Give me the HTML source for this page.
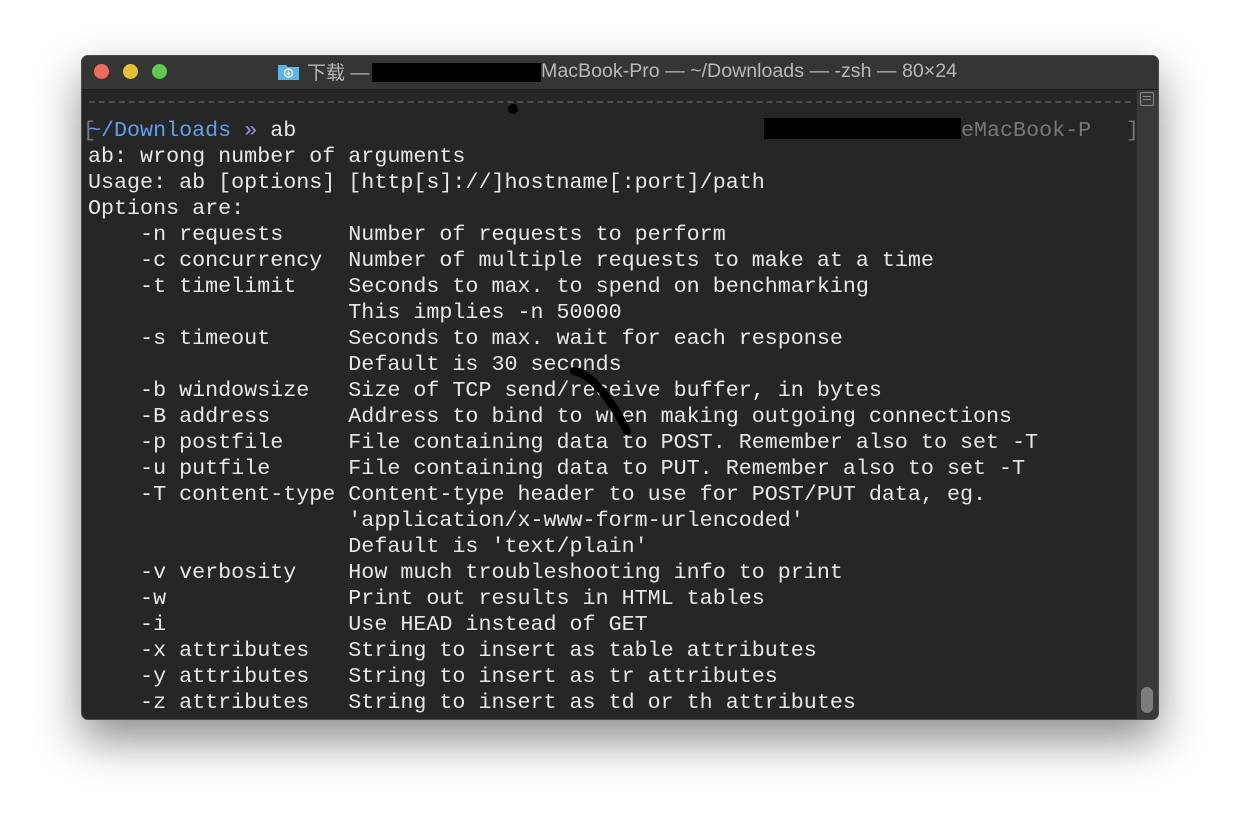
<!DOCTYPE html>
<html><head><meta charset="utf-8"><style>
html,body{margin:0;padding:0;background:#fff;width:1240px;height:828px;overflow:hidden;position:relative}
.win{position:absolute;left:81px;top:55px;width:1078px;height:665px;background:#262626;border-radius:7px;box-shadow:0 20px 45px rgba(0,0,0,.45);overflow:hidden;border:1px solid #4a4a4a;box-sizing:border-box}
.tb{position:absolute;left:0;top:0;width:100%;height:33px;background:#353535;border-bottom:1px solid #1a1a1a}
.dot{position:absolute;top:8px;width:15px;height:15px;border-radius:50%}
.title{position:absolute;top:4px;left:0;width:100%;font:19px "Liberation Sans","Noto Sans CJK SC",sans-serif;color:#b8b8b8;white-space:nowrap}
.term{position:absolute;left:6px;top:62px;font:21.7px/26px "Liberation Mono",monospace;color:#e8e8e8;white-space:pre}
.sb{position:absolute;right:0;top:34px;width:21px;bottom:0;background:#393939;border-left:1px solid #2c2c2c}
</style></head><body>
<div class="win">
<div class="tb">
<div class="dot" style="left:12px;background:#ed6a5e"></div>
<div class="dot" style="left:41px;background:#e3bf3c"></div>
<div class="dot" style="left:70px;background:#62c554"></div>
<div class="title"><svg style="position:absolute;left:196px;top:3px" width="21" height="17" viewBox="0 0 21 17"><path d="M0 2h8l2 2h11v13H0z" fill="#5fb4e6"/><circle cx="10.5" cy="10" r="4" fill="none" stroke="#e9f5fc" stroke-width="1.4"/><path d="M10.5 7.5v4M8.8 10l1.7 1.7 1.7-1.7" stroke="#e9f5fc" stroke-width="1.3" fill="none"/></svg><span style="position:absolute;left:225px;top:-2px">下载 —</span><span style="position:absolute;left:290px;top:3px;width:169px;height:19px;background:#000"></span><span style="position:absolute;left:459px;font-size:19.6px">MacBook-Pro — ~/Downloads — -zsh — 80×24</span></div>
</div>
<div style="position:absolute;left:7px;top:45px;width:1042px;border-top:2px dashed #4e4e4e"></div>
<div style="position:absolute;left:426px;top:48px;width:10px;height:10px;border-radius:50%;background:#000"></div>
<div style="position:absolute;left:682px;top:62px;width:197px;height:21px;background:#000"></div>
<div class="term" style="color:#777;left:879px">eMacBook-P</div>
<div class="term" style="color:#777;left:1044px">]</div>
<div class="term"><span style="position:absolute;left:-5px;color:#777">[</span><span style="color:#5aa2ef">~/Downloads</span> <span style="color:#a48cf0">»</span> ab
ab: wrong number of arguments
Usage: ab [options] [http[s]://]hostname[:port]/path
Options are:
    -n requests     Number of requests to perform
    -c concurrency  Number of multiple requests to make at a time
    -t timelimit    Seconds to max. to spend on benchmarking
                    This implies -n 50000
    -s timeout      Seconds to max. wait for each response
                    Default is 30 seconds
    -b windowsize   Size of TCP send/receive buffer, in bytes
    -B address      Address to bind to when making outgoing connections
    -p postfile     File containing data to POST. Remember also to set -T
    -u putfile      File containing data to PUT. Remember also to set -T
    -T content-type Content-type header to use for POST/PUT data, eg.
                    'application/x-www-form-urlencoded'
                    Default is 'text/plain'
    -v verbosity    How much troubleshooting info to print
    -w              Print out results in HTML tables
    -i              Use HEAD instead of GET
    -x attributes   String to insert as table attributes
    -y attributes   String to insert as tr attributes
    -z attributes   String to insert as td or th attributes</div>
<svg style="position:absolute;left:0;top:0" width="1078" height="665"><path d="M492 315 C510 318 530 345 545 375" stroke="#000" stroke-width="8" stroke-linecap="round" fill="none"/></svg>
<div class="sb"><div style="position:absolute;left:3px;top:2px;width:14px;height:14px;border:1.5px solid #8a8a8a;box-sizing:border-box;border-radius:2px"><div style="margin:3px 2px;border-top:1.5px solid #8a8a8a;border-bottom:1.5px solid #8a8a8a;height:2px"></div></div>
<div style="position:absolute;left:4px;bottom:6px;width:12px;height:26px;border-radius:6px;background:#7c7c7c"></div></div>
</div>
</body></html>
